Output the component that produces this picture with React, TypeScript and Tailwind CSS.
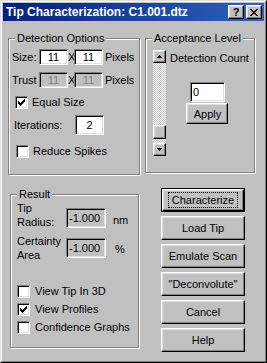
import React from "react";

const sunken =
  "border border-t-[#808080] border-l-[#808080] border-b-white border-r-white shadow-[inset_1px_1px_0_#000,inset_-1px_-1px_0_#dfdfdf]";
const raised =
  "border border-t-white border-l-white border-b-black border-r-black shadow-[inset_-1px_-1px_0_#808080,inset_1px_1px_0_#dfdfdf]";
const etched = "border border-[#808080] shadow-[inset_1px_1px_0_#fff,1px_1px_0_#fff]";

function Group({
  label,
  className,
  children,
}: {
  label: string;
  className: string;
  children: React.ReactNode;
}) {
  return (
    <div className={`relative ${etched} ${className}`}>
      <span className="absolute -top-[8px] left-[6px] bg-[#c0c0c0] px-[2px] leading-[14px]">
        {label}
      </span>
      {children}
    </div>
  );
}

function Check({ checked = false }: { checked?: boolean }) {
  return (
    <span className={`flex h-[13px] w-[13px] shrink-0 items-center justify-center bg-white ${sunken}`}>
      {checked && (
        <svg width="7" height="7" viewBox="0 0 7 7">
          <path d="M0 2h1v1h1v1h1V3h1V2h1V1h1V0h1v3H6v1H5v1H4v1H3v1H2V6H1V5H0z" fill="#000" />
        </svg>
      )}
    </span>
  );
}

function Field({
  value,
  className,
  disabled = false,
  align = "center",
}: {
  value: string;
  className: string;
  disabled?: boolean;
  align?: "center" | "left";
}) {
  return (
    <div
      className={`flex items-center ${sunken} ${className} ${
        disabled ? "bg-[#c0c0c0] text-[#808080]" : "bg-white text-black"
      } ${align === "center" ? "justify-center" : "justify-start pl-[2px]"}`}
    >
      {value}
    </div>
  );
}

function Btn({ label, isDefault = false }: { label: string; isDefault?: boolean }) {
  if (isDefault) {
    return (
      <div className="h-[24px] w-[84px] border border-black">
        <div className={`flex h-full w-full items-center justify-center bg-[#c0c0c0] ${raised}`}>
          <span className="border border-dotted border-black px-[3px] leading-[14px]">{label}</span>
        </div>
      </div>
    );
  }
  return (
    <div className={`flex h-[24px] w-[84px] items-center justify-center bg-[#c0c0c0] ${raised}`}>
      {label}
    </div>
  );
}

function Arrow({ up }: { up?: boolean }) {
  return (
    <div className={`flex h-[13px] w-[13px] items-center justify-center bg-[#c0c0c0] ${raised}`}>
      <svg width="5" height="3" viewBox="0 0 5 3">
        <path d={up ? "M2 0h1v1h1v1h1v1H0V2h1V1h1z" : "M0 0h5v1H4v1H3v1H2V2H1V1H0z"} fill="#000" />
      </svg>
    </div>
  );
}

export default function App() {
  return (
    <div
      className="h-[363px] w-[267px] border border-t-[#dfdfdf] border-l-[#dfdfdf] border-b-black border-r-black bg-[#c0c0c0] text-[11px] leading-[14px] text-black"
      style={{ fontFamily: '"Liberation Sans", Arial, sans-serif' }}
    >
      <div className="h-full w-full border border-t-white border-l-white border-b-[#808080] border-r-[#808080] p-[1px]">
        {/* title bar */}
        <div className="flex h-[18px] items-center bg-gradient-to-r from-[#0a1f78] to-[#2f62c0] pl-[3px] pr-[2px]">
          <span className="text-[12px] font-bold text-white">Tip Characterization: C1.001.dtz</span>
          <div className="ml-auto flex gap-[2px]">
            <div className={`flex h-[14px] w-[16px] items-center justify-center bg-[#c0c0c0] text-[11px] font-bold leading-none ${raised}`}>
              ?
            </div>
            <div className={`flex h-[14px] w-[16px] items-center justify-center bg-[#c0c0c0] ${raised}`}>
              <svg width="8" height="7" viewBox="0 0 8 7">
                <path
                  d="M0 0h2v1h1v1h2V1h1V0h2v1H7v1H6v1H5v1h1v1h1v1h1v1H6V6H5V5H3v1H2v1H0V6h1V5h1V4h1V3H2V2H1V1H0z"
                  fill="#000"
                />
              </svg>
            </div>
          </div>
        </div>

        {/* top row */}
        <div className="flex pl-[5px] pt-[17px]">
          <Group label="Detection Options" className="h-[137px] w-[132px]">
            <div className="flex flex-col pl-[3px] pt-[10px]">
              <div className="flex h-[16px] items-center">
                <span className="w-[27px]">Size:</span>
                <Field value="11" className="h-[16px] w-[29px]" />
                <span className="w-[6px] text-center">X</span>
                <Field value="11" className="h-[16px] w-[29px]" />
                <span className="ml-[2px]">Pixels</span>
              </div>
              <div className="mt-[7px] flex h-[16px] items-center">
                <span className="w-[27px]">Trust</span>
                <Field value="11" disabled className="h-[16px] w-[29px]" />
                <span className="w-[6px] text-center">X</span>
                <Field value="11" disabled className="h-[16px] w-[29px]" />
                <span className="ml-[2px]">Pixels</span>
              </div>
              <div className="mt-[7px] flex items-center pl-[3px]">
                <Check checked />
                <span className="ml-[4px]">Equal Size</span>
              </div>
              <div className="mt-[6px] flex h-[20px] items-center pl-[2px]">
                <span className="w-[61px]">Iterations:</span>
                <Field value="2" className="h-[20px] w-[29px]" />
              </div>
              <div className="mt-[9px] flex items-center pl-[4px]">
                <Check />
                <span className="ml-[4px]">Reduce Spikes</span>
              </div>
            </div>
          </Group>

          <Group label="Acceptance Level" className="ml-[5px] h-[135px] w-[110px]">
            <div className="flex pl-[7px] pt-[11px]">
              <div className="flex h-[106px] w-[13px] flex-col">
                <Arrow up />
                <div className="flex-1 bg-[image:repeating-conic-gradient(#fff_0%_25%,#c0c0c0_0%_50%)] bg-[length:2px_2px]" />
                <div className={`h-[14px] w-[13px] bg-[#c0c0c0] ${raised}`} />
                <div className="h-[4px] bg-[image:repeating-conic-gradient(#fff_0%_25%,#c0c0c0_0%_50%)] bg-[length:2px_2px]" />
                <Arrow />
              </div>
              <div className="ml-[4px] flex flex-col">
                <span className="mt-[1px]">Detection Count</span>
                <div className="mt-[17px] flex flex-col items-center pr-[4px]">
                  <Field value="0" align="left" className="h-[20px] w-[35px]" />
                  <div className={`mt-[1px] flex h-[21px] w-[42px] items-center justify-center bg-[#c0c0c0] ${raised}`}>
                    Apply
                  </div>
                </div>
              </div>
            </div>
          </Group>
        </div>

        {/* bottom row */}
        <div className="flex items-start pl-[7px]">
          <Group label="Result" className="mt-[19px] h-[154px] w-[129px]">
            <div className="flex flex-col pl-[6px] pt-[6px]">
              <div className="flex items-start">
                <span className="w-[49px]">
                  Tip
                  <br />
                  Radius:
                </span>
                <Field value="-1.000" disabled align="left" className="mt-[7px] h-[20px] w-[40px] !text-black" />
                <span className="ml-[7px] mt-[12px]">nm</span>
              </div>
              <div className="mt-[5px] flex items-start">
                <span className="w-[49px]">
                  Certainty
                  <br />
                  Area
                </span>
                <Field value="-1.000" disabled align="left" className="mt-[4px] h-[20px] w-[40px] !text-black" />
                <span className="ml-[9px] mt-[8px]">%</span>
              </div>
              <div className="mt-[22px] flex flex-col gap-[4px]">
                <div className="flex items-center">
                  <Check />
                  <span className="ml-[5px]">View Tip In 3D</span>
                </div>
                <div className="flex items-center">
                  <Check checked />
                  <span className="ml-[5px]">View Profiles</span>
                </div>
                <div className="flex items-center">
                  <Check />
                  <span className="ml-[5px]">Confidence Graphs</span>
                </div>
              </div>
            </div>
          </Group>

          <div className="ml-[22px] mt-[13px] flex flex-col gap-[4px]">
            <Btn label="Characterize" isDefault />
            <Btn label="Load Tip" />
            <Btn label="Emulate Scan" />
            <Btn label={'"Deconvolute"'} />
            <Btn label="Cancel" />
            <Btn label="Help" />
          </div>
        </div>
      </div>
    </div>
  );
}
